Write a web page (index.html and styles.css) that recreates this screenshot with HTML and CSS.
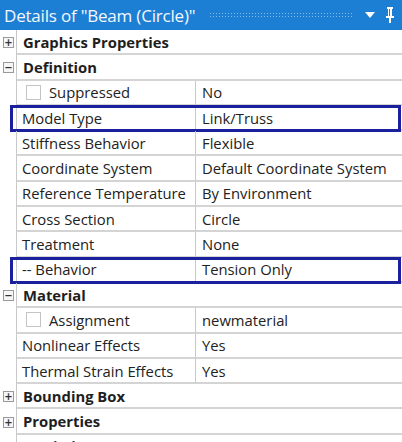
FILE: index.html
```html
<!DOCTYPE html>
<html>
<head>
<meta charset="utf-8">
<link rel="stylesheet" href="styles.css">
</head>
<body>
<div class="panel">
  <div class="header">
    <span class="title">Details of "Beam (Circle)"</span>
    <span class="dots"></span>
    <svg class="hicon" width="12" height="10" viewBox="0 0 12 10"><path d="M1 2 L11 2 L6 8 Z" fill="#fff"/></svg>
    <svg class="hicon pin" width="12" height="18" viewBox="0 0 12 18"><path d="M3 1 H9 V3 H8 V10 H10 V12 H7 V17 H5 V12 H2 V10 H4 V3 H3 Z M5 3 V10 H6 V3 Z" fill="#fff" fill-rule="evenodd"/></svg>
  </div>
  <div class="rows">
    <div class="row group"><div class="gut"><span class="tog">+</span></div><div class="glabel">Graphics Properties</div></div>
    <div class="row group"><div class="gut"><span class="tog">−</span></div><div class="glabel">Definition</div></div>
    <div class="row"><div class="gut"></div><div class="lab"><span class="chk"></span>Suppressed</div><div class="val">No</div></div>
    <div class="row hl"><div class="gut"></div><div class="lab">Model Type</div><div class="val">Link/Truss</div></div>
    <div class="row"><div class="gut"></div><div class="lab">Stiffness Behavior</div><div class="val">Flexible</div></div>
    <div class="row"><div class="gut"></div><div class="lab">Coordinate System</div><div class="val">Default Coordinate System</div></div>
    <div class="row"><div class="gut"></div><div class="lab">Reference Temperature</div><div class="val">By Environment</div></div>
    <div class="row"><div class="gut"></div><div class="lab">Cross Section</div><div class="val">Circle</div></div>
    <div class="row"><div class="gut"></div><div class="lab">Treatment</div><div class="val">None</div></div>
    <div class="row hl"><div class="gut"></div><div class="lab">-- Behavior</div><div class="val">Tension Only</div></div>
    <div class="row group"><div class="gut"><span class="tog">−</span></div><div class="glabel">Material</div></div>
    <div class="row"><div class="gut"></div><div class="lab"><span class="chk"></span>Assignment</div><div class="val">newmaterial</div></div>
    <div class="row"><div class="gut"></div><div class="lab">Nonlinear Effects</div><div class="val">Yes</div></div>
    <div class="row"><div class="gut"></div><div class="lab">Thermal Strain Effects</div><div class="val">Yes</div></div>
    <div class="row group"><div class="gut"><span class="tog">+</span></div><div class="glabel">Bounding Box</div></div>
    <div class="row group"><div class="gut"><span class="tog">+</span></div><div class="glabel">Properties</div></div>
    <div class="row group"><div class="gut"><span class="tog">+</span></div><div class="glabel">Statistics</div></div>
  </div>
</div>
</body>
</html>
```
FILE: styles.css
```css
html, body {
  margin: 0;
  padding: 0;
  background: #fff;
  overflow: hidden;
}
.panel {
  width: 402px;
  font-family: "Open Sans", "Noto Sans", sans-serif;
  font-size: 14.8px;
  color: #222;
}
.header {
  height: 30px;
  background: #1c7fd4;
  display: flex;
  align-items: center;
  padding: 0 6px 0 4px;
  box-sizing: border-box;
}
.title {
  color: #f4f8fc;
  font-size: 17px;
  white-space: nowrap;
  letter-spacing: -0.2px;
}
.dots {
  flex: 1;
  height: 6px;
  margin: 0 10px 0 14px;
  background-image: radial-gradient(circle, rgba(255,255,255,0.45) 0.8px, transparent 1px);
  background-size: 3px 3px;
}
.hicon { display: block; }
.pin { margin-left: 8px; }
.rows { display: flex; flex-direction: column; }
.row {
  position: relative;
  height: 25.3px;
  display: flex;
  align-items: stretch;
}
.gut {
  width: 17px;
  flex: none;
  display: flex;
  align-items: center;
  justify-content: flex-start;
  padding-left: 3px;
  box-sizing: border-box;
  border-right: 1px solid #c9c9c9;
}
.tog {
  width: 9px;
  height: 9px;
  border: 1px solid #9a9a9a;
  font-size: 10px;
  line-height: 9px;
  text-align: center;
  color: #333;
  font-family: "DejaVu Sans", sans-serif;
  font-weight: bold;
  background: #f6f6f6;
}
.glabel {
  flex: 1;
  font-weight: bold;
  display: flex;
  align-items: center;
  padding-left: 6px;
  border-bottom: 2px solid #d4d4d4;
  color: #1e1e1e;
}
.lab {
  width: 179px;
  flex: none;
  box-sizing: border-box;
  display: flex;
  align-items: center;
  padding-left: 5px;
  border-right: 1px solid #c9c9c9;
  border-bottom: 2px solid #d4d4d4;
  white-space: nowrap;
}
.val {
  flex: 1;
  display: flex;
  align-items: center;
  padding-left: 6px;
  border-bottom: 2px solid #d4d4d4;
  white-space: nowrap;
}
.chk {
  width: 13px;
  height: 13px;
  border: 1px solid #c4c4c4;
  margin: 0 8px 0 4px;
  flex: none;
}
.hl::after {
  content: "";
  position: absolute;
  left: 10px;
  right: 1px;
  top: -1px;
  bottom: -1px;
  border: 3px solid #1a209e;
  pointer-events: none;
}
```
